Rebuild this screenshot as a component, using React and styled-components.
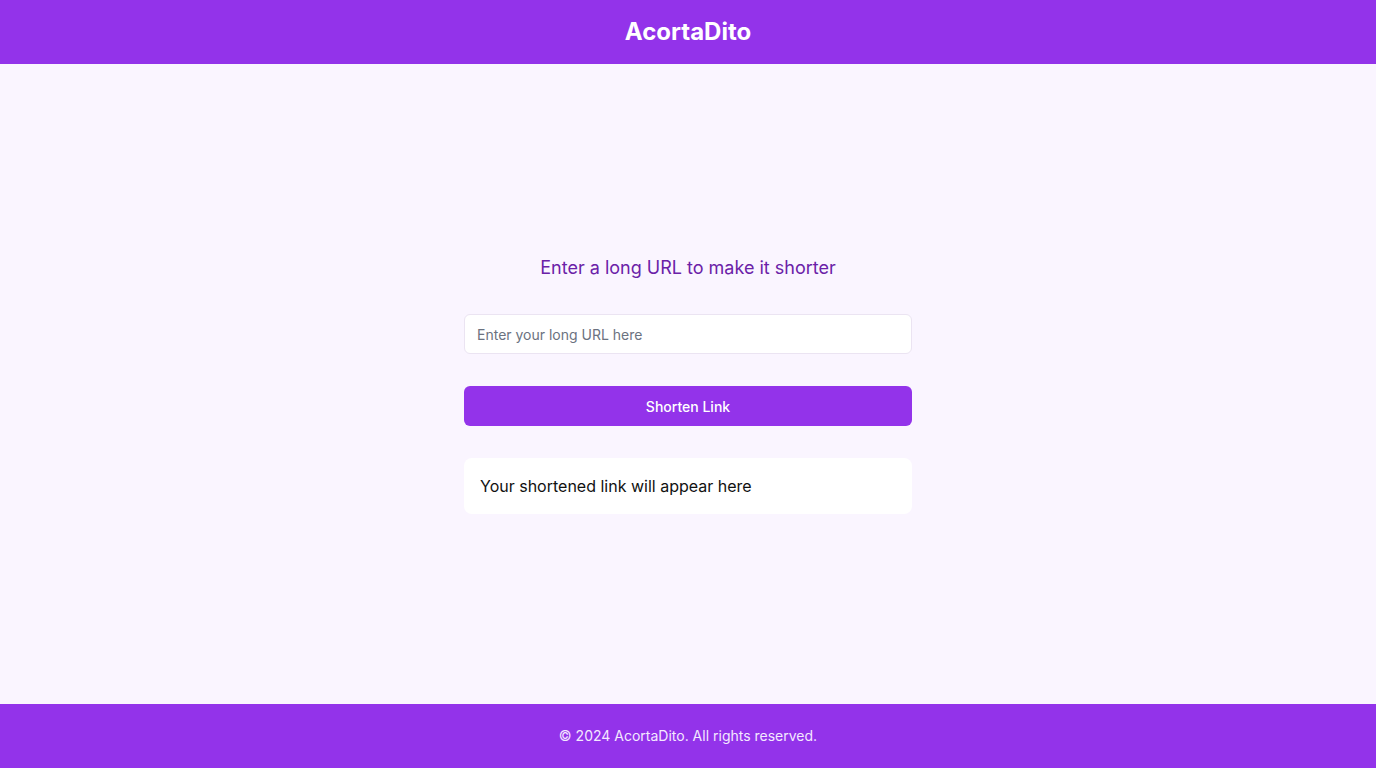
import React from "react";
import styled, { createGlobalStyle } from "styled-components";

const GlobalStyle = createGlobalStyle`
  html, body { margin: 0; padding: 0; }
  body {
    font-family: Inter, "Noto Sans", sans-serif;
    background: #faf5ff;
  }
  * { box-sizing: border-box; }
`;

const Page = styled.div`
  display: flex;
  flex-direction: column;
  min-height: 768px;
`;

const Bar = styled.header`
  height: 64px;
  background: #9333ea;
  color: ${(p) => p.$text || "#ffffff"};
  display: flex;
  align-items: center;
  justify-content: center;
  flex-shrink: 0;
`;

const Brand = styled.h1`
  margin: 0;
  font-size: 24px;
  line-height: 32px;
  font-weight: 700;
`;

const Main = styled.main`
  flex: 1;
  display: flex;
  align-items: center;
  justify-content: center;
`;

const Column = styled.div`
  width: 448px;
  display: flex;
  flex-direction: column;
  gap: 32px;
`;

const Heading = styled.h2`
  margin: 0;
  font-size: 18px;
  line-height: 28px;
  font-weight: 400;
  color: #6b21a8;
  text-align: center;
`;

const Input = styled.input`
  width: 100%;
  height: 40px;
  padding: 0 12px;
  border: 1px solid #ebe4f2;
  border-radius: 6px;
  background: #ffffff;
  font-family: inherit;
  font-size: 14px;
  color: #111827;
  outline: none;
  &::placeholder { color: #6b7280; }
`;

const Button = styled.button`
  width: 100%;
  height: 40px;
  border: none;
  border-radius: 6px;
  background: #9333ea;
  color: #ffffff;
  font-family: inherit;
  font-size: 14px;
  font-weight: 500;
  cursor: pointer;
`;

const Result = styled.div`
  background: #ffffff;
  border-radius: 8px;
  padding: 16px;
  font-size: 16px;
  line-height: 24px;
  color: #111111;
`;

const FooterText = styled.p`
  margin: 0;
  font-size: 14px;
  line-height: 20px;
`;

export default function App() {
  return (
    <>
      <GlobalStyle />
      <Page>
        <Bar>
          <Brand>AcortaDito</Brand>
        </Bar>
        <Main>
          <Column>
            <Heading>Enter a long URL to make it shorter</Heading>
            <Input placeholder="Enter your long URL here" />
            <Button>Shorten Link</Button>
            <Result>Your shortened link will appear here</Result>
          </Column>
        </Main>
        <Bar as="footer" $text="#f3e8ff">
          <FooterText>© 2024 AcortaDito. All rights reserved.</FooterText>
        </Bar>
      </Page>
    </>
  );
}
